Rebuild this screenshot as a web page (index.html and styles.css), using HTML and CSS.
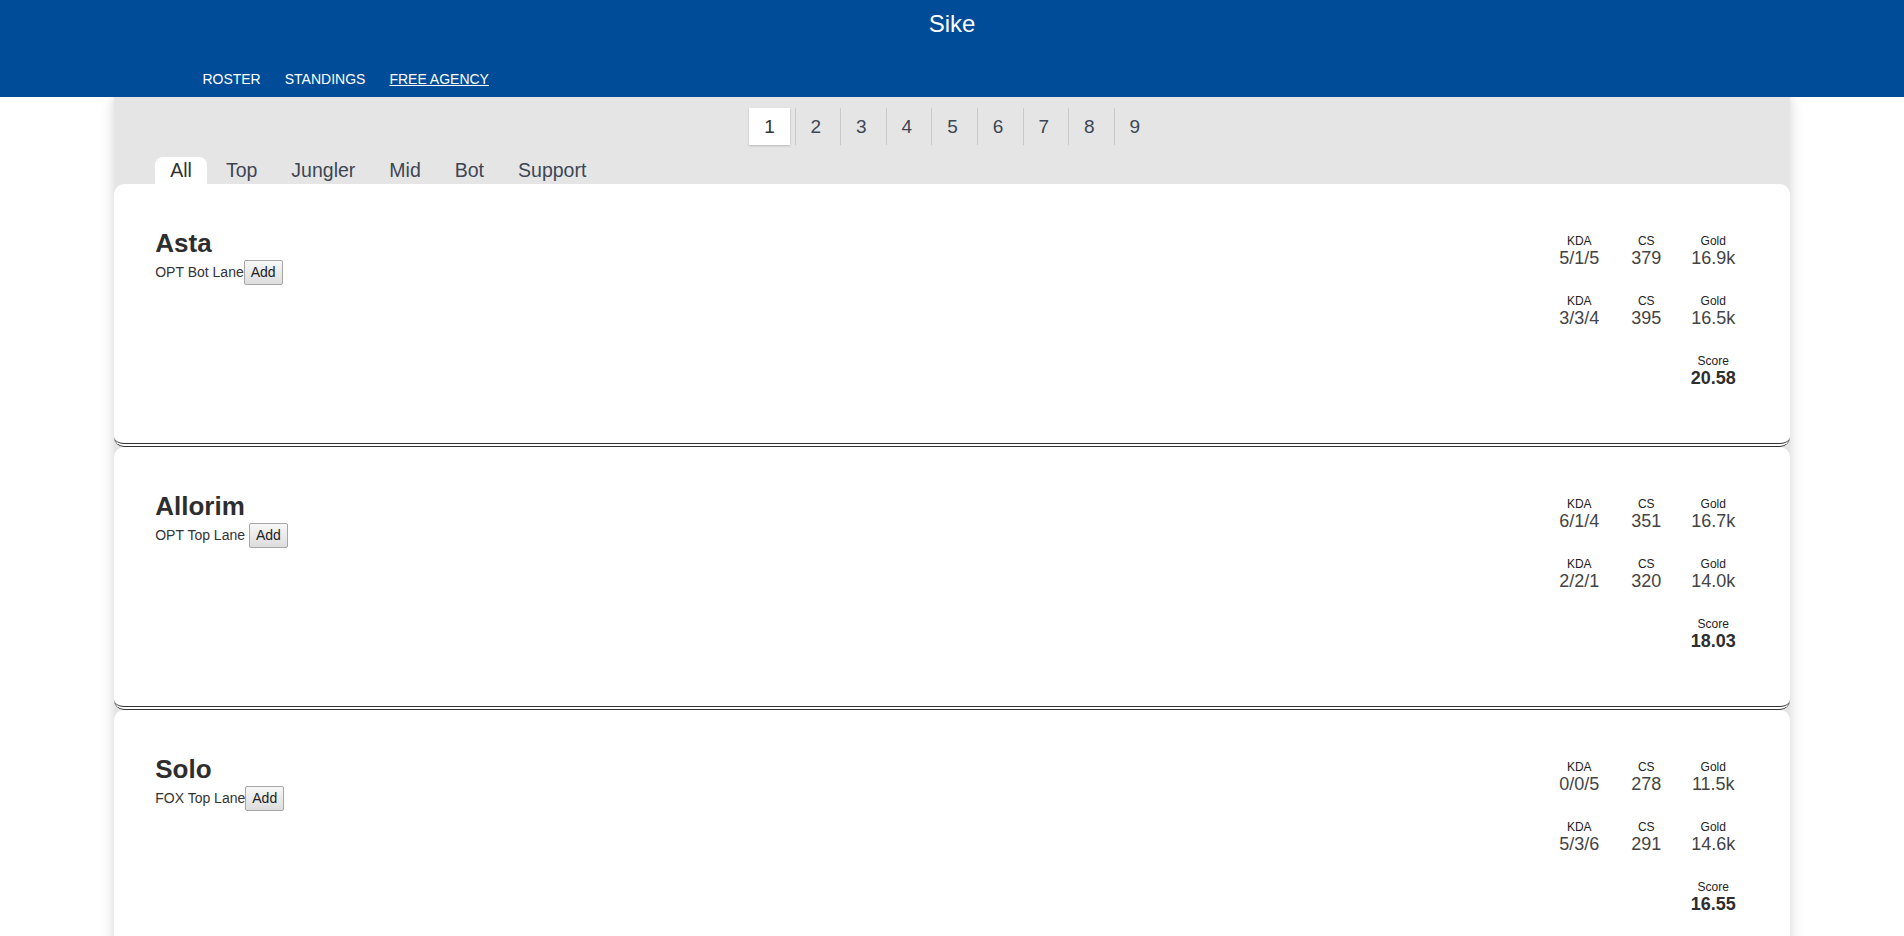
FILE: index.html
```html
<!DOCTYPE html>
<html lang="en">
<head>
<meta charset="utf-8">
<title>Sike - Free Agency</title>
<link rel="stylesheet" href="styles.css">
</head>
<body>
<header class="topbar">
  <h1 class="brand">Sike</h1>
  <nav class="mainnav">
    <a class="navlink" href="#">ROSTER</a>
    <a class="navlink" href="#">STANDINGS</a>
    <a class="navlink active" href="#">FREE AGENCY</a>
  </nav>
</header>
<main class="panel">
  <div class="pager">
    <span class="page active">1</span>
    <span class="page">2</span>
    <span class="page">3</span>
    <span class="page">4</span>
    <span class="page">5</span>
    <span class="page">6</span>
    <span class="page">7</span>
    <span class="page">8</span>
    <span class="page">9</span>
  </div>
  <div class="tabs">
    <span class="tab active">All</span>
    <span class="tab">Top</span>
    <span class="tab">Jungler</span>
    <span class="tab">Mid</span>
    <span class="tab">Bot</span>
    <span class="tab">Support</span>
  </div>
  <section class="cards">
    <article class="card">
      <div class="info">
        <h2 class="name">Asta</h2>
        <p class="meta">OPT Bot Lane<button class="add">Add</button></p>
      </div>
      <div class="stats">
        <div class="stat"><div class="label">KDA</div><div class="value">5/1/5</div></div>
        <div class="stat"><div class="label">CS</div><div class="value">379</div></div>
        <div class="stat"><div class="label">Gold</div><div class="value">16.9k</div></div>
        <div class="stat"><div class="label">KDA</div><div class="value">3/3/4</div></div>
        <div class="stat"><div class="label">CS</div><div class="value">395</div></div>
        <div class="stat"><div class="label">Gold</div><div class="value">16.5k</div></div>
        <div class="stat score"><div class="label">Score</div><div class="value">20.58</div></div>
      </div>
    </article>
    <article class="card">
      <div class="info">
        <h2 class="name">Allorim</h2>
        <p class="meta">OPT Top Lane <button class="add">Add</button></p>
      </div>
      <div class="stats">
        <div class="stat"><div class="label">KDA</div><div class="value">6/1/4</div></div>
        <div class="stat"><div class="label">CS</div><div class="value">351</div></div>
        <div class="stat"><div class="label">Gold</div><div class="value">16.7k</div></div>
        <div class="stat"><div class="label">KDA</div><div class="value">2/2/1</div></div>
        <div class="stat"><div class="label">CS</div><div class="value">320</div></div>
        <div class="stat"><div class="label">Gold</div><div class="value">14.0k</div></div>
        <div class="stat score"><div class="label">Score</div><div class="value">18.03</div></div>
      </div>
    </article>
    <article class="card">
      <div class="info">
        <h2 class="name">Solo</h2>
        <p class="meta">FOX Top Lane<button class="add">Add</button></p>
      </div>
      <div class="stats">
        <div class="stat"><div class="label">KDA</div><div class="value">0/0/5</div></div>
        <div class="stat"><div class="label">CS</div><div class="value">278</div></div>
        <div class="stat"><div class="label">Gold</div><div class="value">11.5k</div></div>
        <div class="stat"><div class="label">KDA</div><div class="value">5/3/6</div></div>
        <div class="stat"><div class="label">CS</div><div class="value">291</div></div>
        <div class="stat"><div class="label">Gold</div><div class="value">14.6k</div></div>
        <div class="stat score"><div class="label">Score</div><div class="value">16.55</div></div>
      </div>
    </article>
  </section>
</main>
</body>
</html>
```
FILE: styles.css
```css
* { box-sizing: border-box; }

html, body {
  margin: 0;
  padding: 0;
  background: #ffffff;
  font-family: "Liberation Sans", Arial, sans-serif;
  color: #333333;
}

.topbar {
  background: #004c99;
  height: 97px;
  padding-top: 10px;
  position: relative;
  z-index: 2;
}

.brand {
  margin: 0;
  text-align: center;
  color: #ffffff;
  font-size: 24px;
  font-weight: normal;
  line-height: 28px;
}

.mainnav {
  display: flex;
  margin: 33px 0 0 10%;
}

.navlink {
  color: #ffffff;
  text-decoration: none;
  font-size: 14px;
  line-height: 16px;
  padding: 0 12px;
}

.navlink.active {
  text-decoration: underline;
}

.panel {
  width: 88%;
  margin: 0 auto;
  background: #e5e5e5;
  box-shadow: 0 0 12px rgba(0, 0, 0, 0.18);
  padding-top: 11px;
  position: relative;
  z-index: 1;
}

.pager {
  display: flex;
  justify-content: center;
  gap: 4.6px;
  height: 37px;
}

.page {
  width: 41px;
  height: 37px;
  line-height: 37px;
  text-align: center;
  font-size: 19px;
  color: #3d4653;
  border-left: 1px solid #c9c9c9;
}

.page:first-child {
  border-left: 0;
}

.page.active {
  background: #ffffff;
  color: #333333;
  box-shadow: 0 1px 2px rgba(0, 0, 0, 0.2);
}

.tabs {
  display: flex;
  gap: 4px;
  margin-top: 12px;
  padding-left: 41px;
  height: 27px;
}

.tab {
  font-size: 19.5px;
  line-height: 27px;
  padding: 0 15px;
  color: #3d4653;
  border-radius: 8px 8px 0 0;
}

.tab.active {
  background: #ffffff;
  color: #333333;
}

.cards {
  display: flex;
  flex-direction: column;
}

.card {
  display: flex;
  justify-content: space-between;
  align-items: flex-start;
  background: #ffffff;
  border-radius: 10px;
  border-bottom: 4px double #333333;
  padding: 0 43px 0 41px;
}

.info {
  padding-top: 44px;
}

.name {
  margin: 0;
  font-size: 26px;
  font-weight: bold;
  line-height: 30px;
  color: #2e2e2e;
}

.meta {
  margin: 0;
  padding-top: 2px;
  font-size: 14px;
  color: #333333;
}

.add {
  font-family: "Liberation Sans", Arial, sans-serif;
  font-size: 14px;
  line-height: 17px;
  padding: 3px 6px;
  color: #222222;
  background: linear-gradient(#f7f7f7, #dddddd);
  border: 1px solid #a6a6a6;
  border-radius: 2px;
}

.stats {
  display: grid;
  grid-template-columns: repeat(3, 67px);
  row-gap: 26px;
  padding: 50px 0 55px;
  text-align: center;
}

.stat .label {
  font-size: 12px;
  line-height: 14px;
  color: #222222;
}

.stat .value {
  font-size: 18px;
  line-height: 20px;
  color: #444444;
}

.stat.score {
  grid-column: 3;
}

.stat.score .value {
  font-weight: bold;
  color: #2e2e2e;
}
```
